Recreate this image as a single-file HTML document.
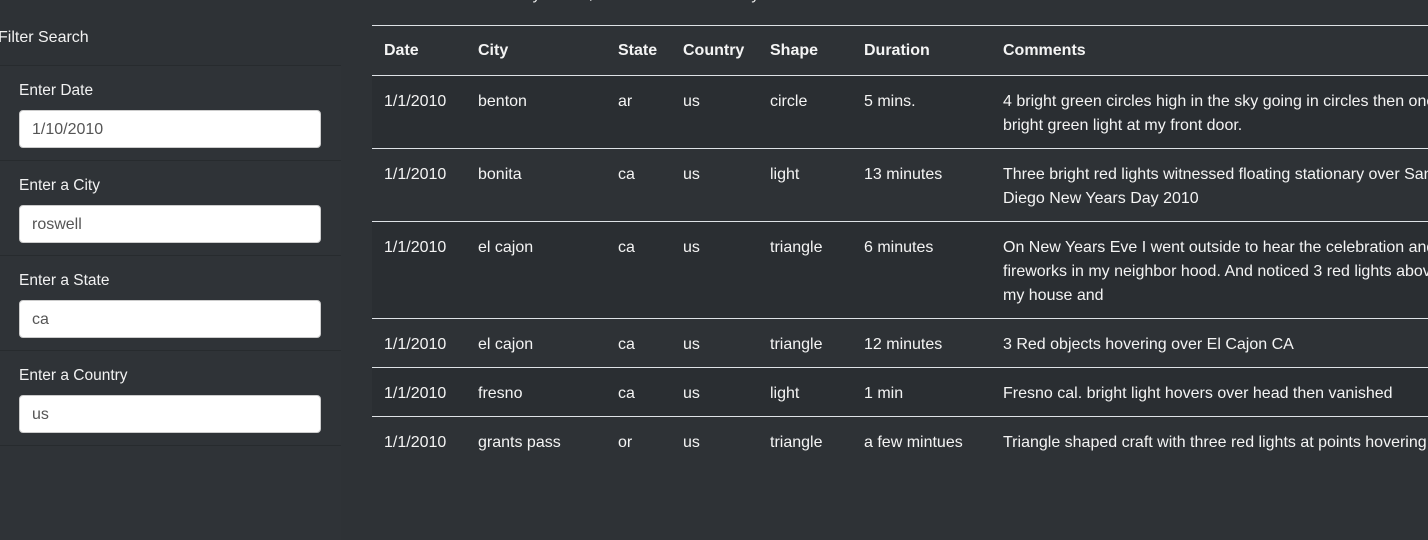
<!DOCTYPE html>
<html><head><meta charset="utf-8"><style>
html,body{margin:0;padding:0;width:1428px;height:455px;overflow:hidden;background:#2e3236;font-family:"Liberation Sans",Arial,sans-serif;color:#fff;}
.abs{position:absolute;white-space:nowrap}
.item{position:absolute;left:0;width:341px;height:94px;border-top:1px solid #272b2e;background:#2f3337}
.item .lb{position:absolute;left:19px;top:16px;font-size:15.5px;color:#f2f2f2}
.item .in{position:absolute;left:19px;top:44px;width:300px;height:36px;background:#fff;border:1px solid #ccc;border-radius:4px;color:#555;font-size:16px;line-height:38px;box-sizing:content-box}
.item .in span{padding-left:12px}
.row{position:absolute;left:372px;width:1056px;border-top:1px solid #dee2e6}
.row.odd{background:#2a2e32}
.c{position:absolute;top:14px;font-size:16px;line-height:24px;white-space:nowrap;color:#f4f4f4}
.h .c{font-weight:bold;top:13px}
</style></head><body>
<div class="abs" style="left:497px;top:-14px;font-size:16px;color:#eee">data yourself, and let us know what you see.</div>
<div class="abs" style="left:-2px;top:29px;font-size:16px;color:#f2f2f2">Filter Search</div>
<div class="item" style="top:65px"><div class="lb">Enter Date</div><div class="in"><span>1/10/2010</span></div></div>
<div class="item" style="top:160px"><div class="lb">Enter a City</div><div class="in"><span>roswell</span></div></div>
<div class="item" style="top:255px"><div class="lb">Enter a State</div><div class="in"><span>ca</span></div></div>
<div class="item" style="top:350px"><div class="lb">Enter a Country</div><div class="in"><span>us</span></div></div>
<div class="item" style="top:445px"></div>

<div class="row h" style="top:25px;height:49px;border-bottom:2px solid #dee2e6">
<div class="c" style="left:12px">Date</div><div class="c" style="left:106px">City</div><div class="c" style="left:246px">State</div><div class="c" style="left:311px">Country</div><div class="c" style="left:398px">Shape</div><div class="c" style="left:492px">Duration</div><div class="c" style="left:631px">Comments</div></div>

<div class="row odd" style="top:76px;height:72px;border-top:none">
<div class="c" style="left:12px">1/1/2010</div><div class="c" style="left:106px">benton</div><div class="c" style="left:246px">ar</div><div class="c" style="left:311px">us</div><div class="c" style="left:398px">circle</div><div class="c" style="left:492px">5 mins.</div><div class="c" style="left:631px">4 bright green circles high in the sky going in circles then one<br>bright green light at my front door.</div></div>

<div class="row" style="top:148px;height:72px">
<div class="c" style="left:12px">1/1/2010</div><div class="c" style="left:106px">bonita</div><div class="c" style="left:246px">ca</div><div class="c" style="left:311px">us</div><div class="c" style="left:398px">light</div><div class="c" style="left:492px">13 minutes</div><div class="c" style="left:631px">Three bright red lights witnessed floating stationary over San<br>Diego New Years Day 2010</div></div>

<div class="row odd" style="top:221px;height:96px">
<div class="c" style="left:12px">1/1/2010</div><div class="c" style="left:106px">el cajon</div><div class="c" style="left:246px">ca</div><div class="c" style="left:311px">us</div><div class="c" style="left:398px">triangle</div><div class="c" style="left:492px">6 minutes</div><div class="c" style="left:631px">On New Years Eve I went outside to hear the celebration and<br>fireworks in my neighbor hood. And noticed 3 red lights above<br>my house and</div></div>

<div class="row" style="top:318px;height:48px">
<div class="c" style="left:12px">1/1/2010</div><div class="c" style="left:106px">el cajon</div><div class="c" style="left:246px">ca</div><div class="c" style="left:311px">us</div><div class="c" style="left:398px">triangle</div><div class="c" style="left:492px">12 minutes</div><div class="c" style="left:631px">3 Red objects hovering over El Cajon CA</div></div>

<div class="row odd" style="top:367px;height:48px">
<div class="c" style="left:12px">1/1/2010</div><div class="c" style="left:106px">fresno</div><div class="c" style="left:246px">ca</div><div class="c" style="left:311px">us</div><div class="c" style="left:398px">light</div><div class="c" style="left:492px">1 min</div><div class="c" style="left:631px">Fresno cal. bright light hovers over head then vanished</div></div>

<div class="row" style="top:416px;height:48px">
<div class="c" style="left:12px">1/1/2010</div><div class="c" style="left:106px">grants pass</div><div class="c" style="left:246px">or</div><div class="c" style="left:311px">us</div><div class="c" style="left:398px">triangle</div><div class="c" style="left:492px">a few mintues</div><div class="c" style="left:631px">Triangle shaped craft with three red lights at points hovering</div></div>
</body></html>
